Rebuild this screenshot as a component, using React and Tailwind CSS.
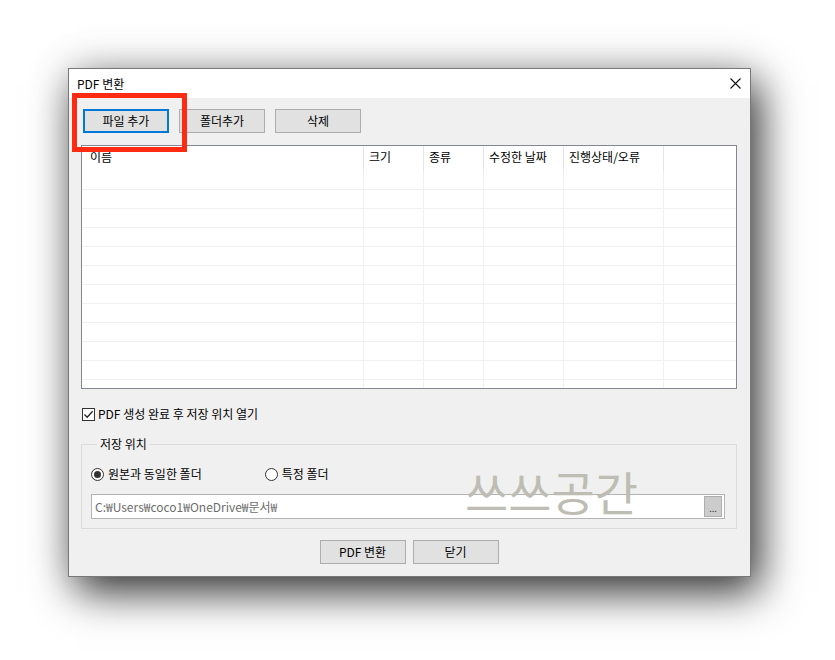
import { useState } from 'react'

const font = { fontFamily: '"Noto Sans CJK KR", "Noto Sans", sans-serif' }

const columns = [
  { label: '이름', w: 'w-[282px]', pad: 'pl-[8px]' },
  { label: '크기', w: 'w-[60px]', pad: 'pl-[5px]' },
  { label: '종류', w: 'w-[60px]', pad: 'pl-[5px]' },
  { label: '수정한 날짜', w: 'w-[80px]', pad: 'pl-[5px]' },
  { label: '진행상태/오류', w: 'w-[100px]', pad: 'pl-[5px]' },
]

function WinButton({ children, focused, className = '' }) {
  return (
    <button
      className={`h-[24px] w-[86px] bg-[#e1e1e1] text-[12px] leading-none text-black ${
        focused ? 'border-2 border-[#0078d7]' : 'border border-[#adadad]'
      } ${className}`}
    >
      {children}
    </button>
  )
}

function Radio({ checked, label, onClick }) {
  return (
    <button onClick={onClick} className="flex items-center gap-[4px] text-[12px] leading-[16px]">
      <span className="flex h-[13px] w-[13px] items-center justify-center rounded-full border border-[#333] bg-white">
        {checked && <span className="h-[7px] w-[7px] rounded-full bg-[#333]" />}
      </span>
      {label}
    </button>
  )
}

export default function App() {
  const [openAfter, setOpenAfter] = useState(true)
  const [target, setTarget] = useState('same')

  return (
    <div className="h-[660px] w-[835px] overflow-hidden bg-white pl-[68px] pt-[68px]" style={font}>
      <div className="relative flex h-[509px] w-[683px] flex-col border border-[#787878] bg-[#f0f0f0] shadow-[8px_15px_40px_rgba(0,0,0,0.8),0_-4px_40px_rgba(0,0,0,0.1)]">
        {/* title bar */}
        <div className="flex h-[29px] items-center justify-between bg-white pl-[8px] pr-[9px]">
          <span className="text-[12px] leading-none text-black">PDF 변환</span>
          <svg width="11" height="11" viewBox="0 0 11 11">
            <path d="M0.5 0.5 L10.5 10.5 M10.5 0.5 L0.5 10.5" stroke="#111" strokeWidth="1.1" fill="none" />
          </svg>
        </div>

        <div className="flex flex-1 flex-col pl-[12px] pr-[13px] pt-[11px]">
          <div className="ml-[2px] flex gap-[10px]">
            <WinButton focused className="h-[23px]">파일 추가</WinButton>
            <WinButton className="h-[23px]">폴더추가</WinButton>
            <WinButton className="h-[23px]">삭제</WinButton>
          </div>

          {/* list view */}
          <div className="mt-[12px] flex h-[244px] flex-col border border-[#828790] bg-white">
            <div className="flex h-[25px] shrink-0">
              {columns.map((c) => (
                <div
                  key={c.label}
                  className={`${c.w} ${c.pad} border-r border-[#e5e5e5] pt-[3px] text-[12px] leading-[16px] text-black`}
                >
                  {c.label}
                </div>
              ))}
            </div>
            {Array.from({ length: 11 }).map((_, i) => (
              <div key={i} className="flex h-[19px] shrink-0 border-b border-[#f0f0f0]">
                {columns.map((c) => (
                  <div key={c.label} className={`${c.w} border-r border-[#f0f0f0]`} />
                ))}
              </div>
            ))}
            <div className="flex flex-1">
              {columns.map((c) => (
                <div key={c.label} className={`${c.w} border-r border-[#f0f0f0]`} />
              ))}
            </div>
          </div>

          {/* checkbox */}
          <button
            onClick={() => setOpenAfter(!openAfter)}
            className="mt-[17px] flex h-[16px] items-center gap-[3px] text-[12px] leading-[16px] text-black"
          >
            <span className="ml-[1px] flex h-[13px] w-[13px] items-center justify-center border border-[#333] bg-white">
              {openAfter && (
                <svg width="11" height="11" viewBox="0 0 11 11">
                  <path d="M1.5 5.5 L4.2 8.3 L9.6 2.2" stroke="#222" strokeWidth="1.3" fill="none" />
                </svg>
              )}
            </span>
            PDF 생성 완료 후 저장 위치 열기
          </button>

          {/* group box */}
          <fieldset className="mt-[14px] border border-[#dcdcdc] pb-[9px] pl-[9px] pr-[11px]">
            <legend className="ml-[6px] px-[3px] text-[12px] leading-[16px] text-black">저장 위치</legend>
            <div className="mt-[14px] flex h-[16px] items-center">
              <Radio checked={target === 'same'} label="원본과 동일한 폴더" onClick={() => setTarget('same')} />
              <div className="ml-[63px]">
                <Radio checked={target === 'custom'} label="특정 폴더" onClick={() => setTarget('custom')} />
              </div>
            </div>
            <div className="mt-[12px] flex h-[25px] items-center border border-[#b4b4b4] bg-white pl-[3px] pr-[2px]">
              <span className="flex-1 text-[12px] leading-none text-[#6d6d6d]">C:₩Users₩coco1₩OneDrive₩문서₩</span>
              <span className="flex h-[21px] w-[18px] items-end justify-center border border-[#adadad] bg-[#cccccc] pb-[3px] text-[9px] leading-none text-[#333]">
                ...
              </span>
            </div>
          </fieldset>

          <div className="mt-[11px] flex justify-center gap-[7px]">
            <WinButton>PDF 변환</WinButton>
            <WinButton>닫기</WinButton>
          </div>
        </div>

        {/* watermark */}
        <div className="pointer-events-none absolute left-[396px] top-[398px] text-[47px] leading-none text-[#bdbdb3]">
          쓰쓰공간
        </div>

        {/* highlight box */}
        <div className="pointer-events-none absolute left-[3px] top-[24px] h-[59px] w-[115px] border-[5px] border-[#ff2a12]" />
      </div>
    </div>
  )
}
